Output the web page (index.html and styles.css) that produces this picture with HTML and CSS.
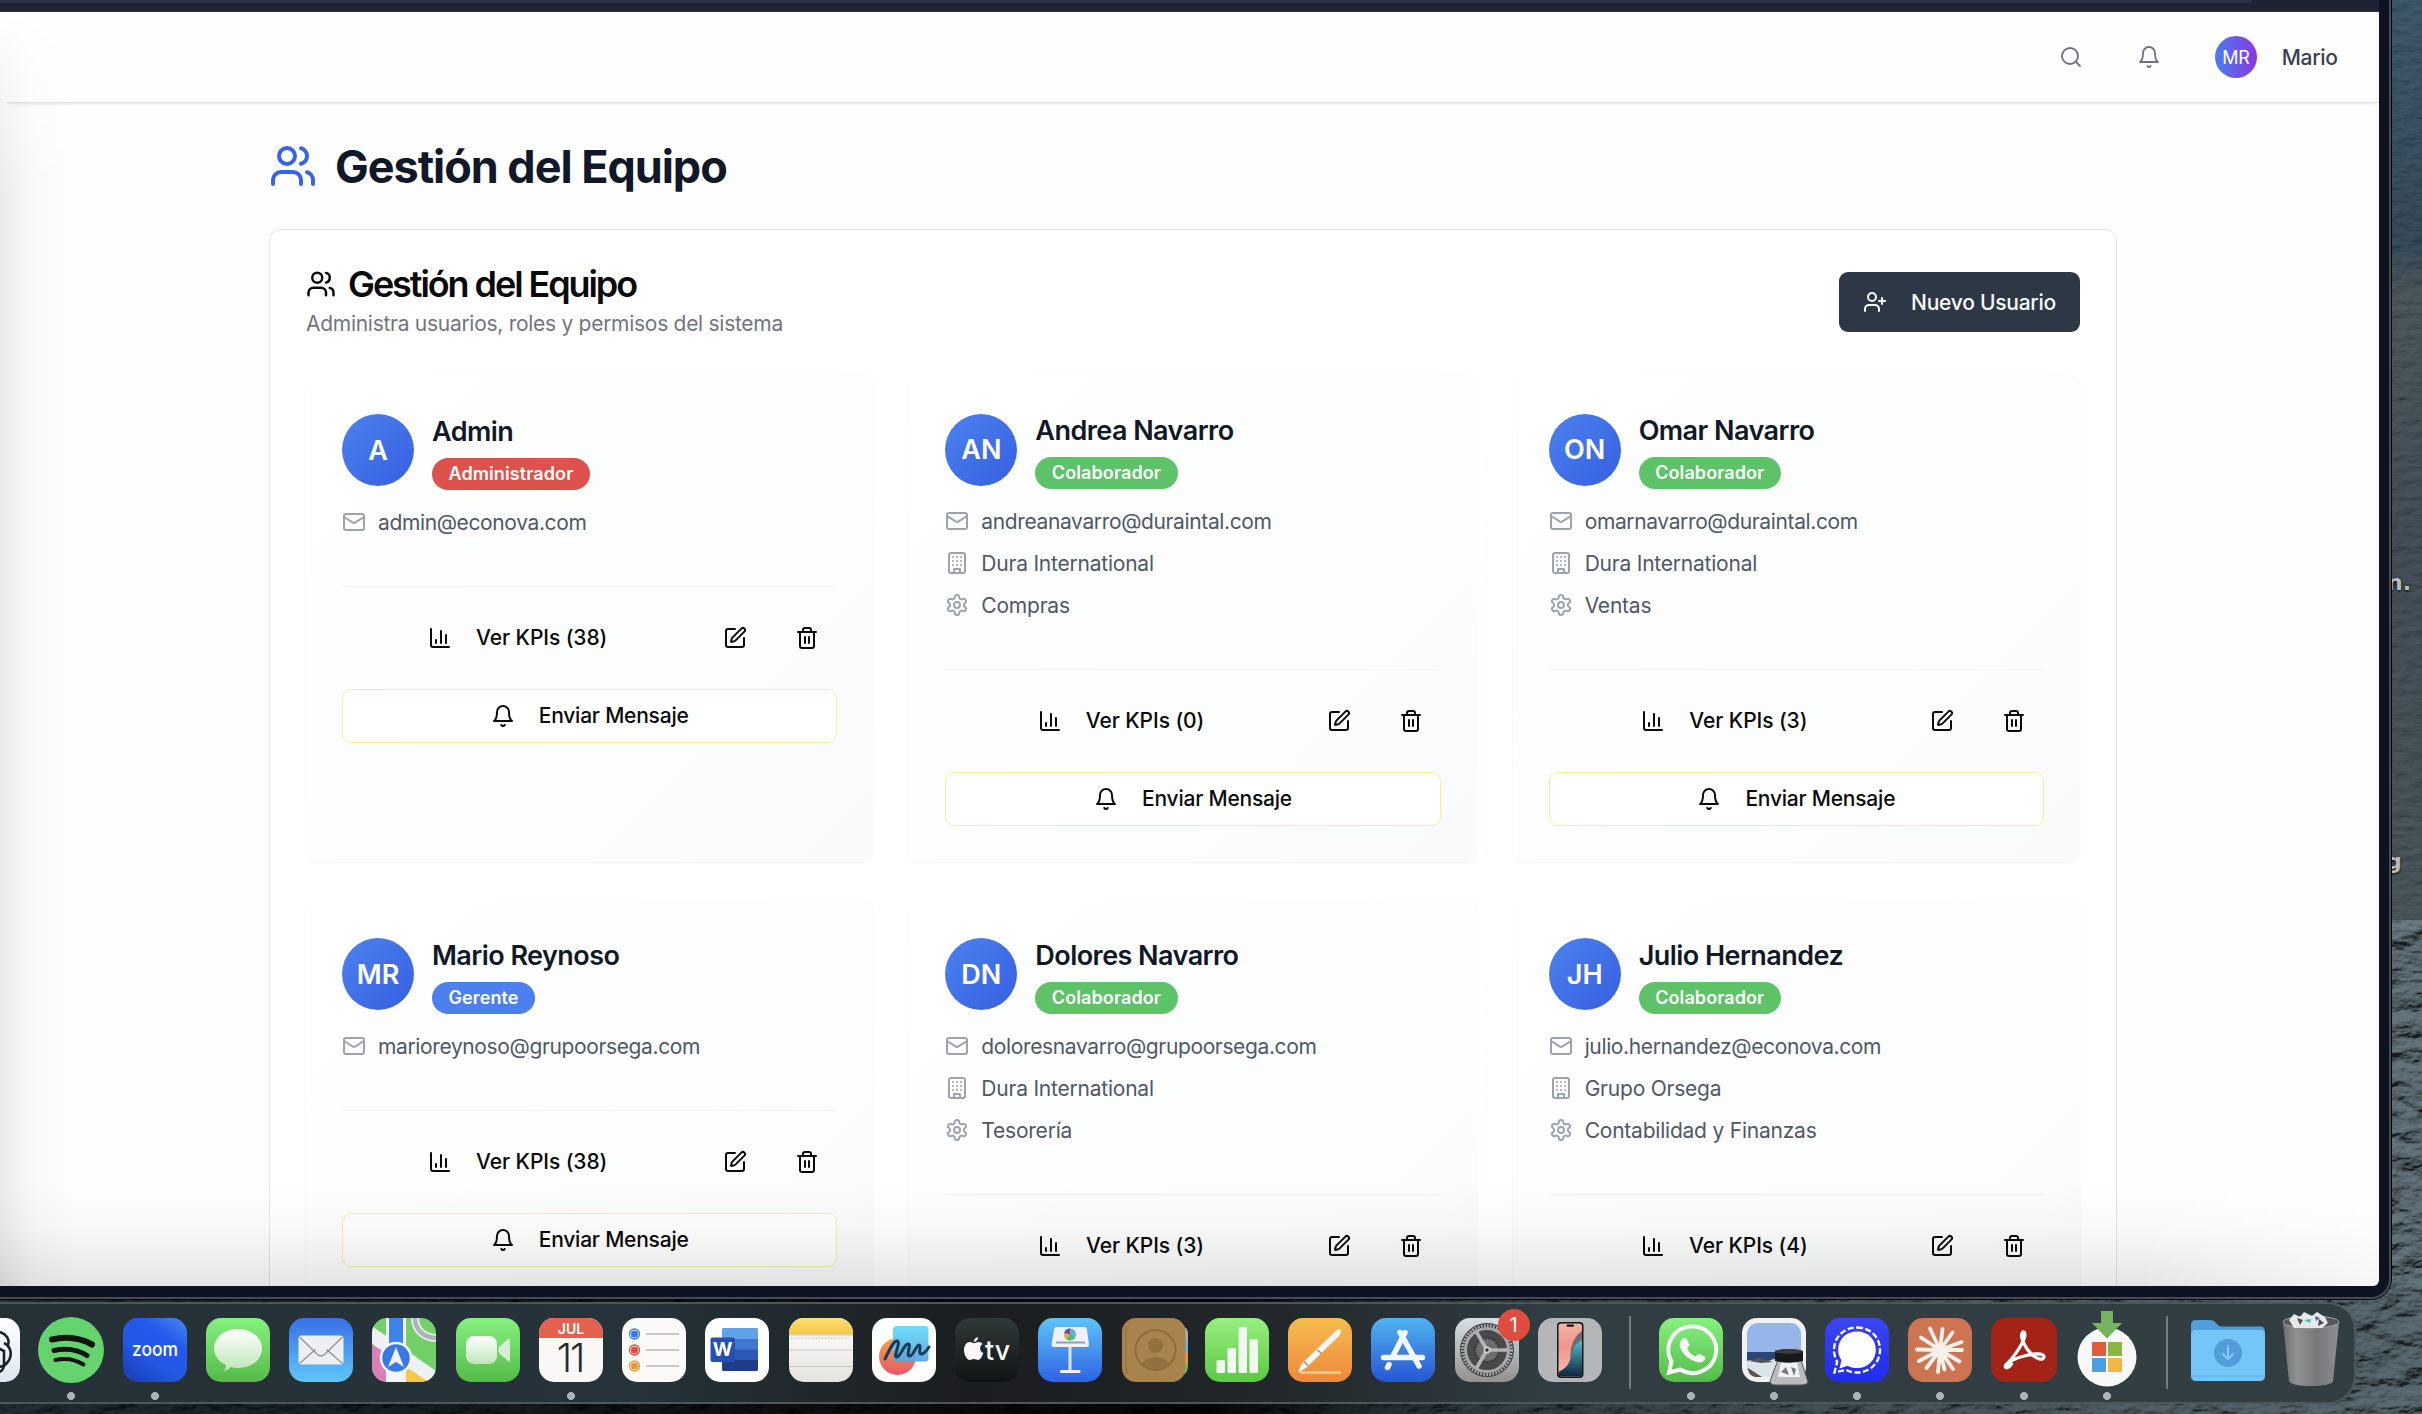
FILE: index.html
```html
<!DOCTYPE html>
<html lang="es">
<head>
<meta charset="utf-8">
<title>Gestión del Equipo</title>
<link rel="stylesheet" href="styles.css">
</head>
<body>
<svg class="defs" width="0" height="0" aria-hidden="true">
  <symbol id="users" viewBox="0 0 24 24"><path d="M16 21v-2a4 4 0 0 0-4-4H6a4 4 0 0 0-4 4v2"/><circle cx="9" cy="7" r="4"/><path d="M22 21v-2a4 4 0 0 0-3-3.87"/><path d="M16 3.13a4 4 0 0 1 0 7.75"/></symbol>
  <symbol id="user-plus" viewBox="0 0 24 24"><path d="M16 21v-2a4 4 0 0 0-4-4H6a4 4 0 0 0-4 4v2"/><circle cx="9" cy="7" r="4"/><path d="M19 8v6M22 11h-6"/></symbol>
  <symbol id="search" viewBox="0 0 24 24"><circle cx="11" cy="11" r="8"/><path d="m21 21-4.3-4.3"/></symbol>
  <symbol id="bell" viewBox="0 0 24 24"><path d="M6 8a6 6 0 0 1 12 0c0 7 3 9 3 9H3s3-2 3-9"/><path d="M10.3 21a1.94 1.94 0 0 0 3.4 0"/></symbol>
  <symbol id="mail" viewBox="0 0 24 24"><rect width="20" height="16" x="2" y="4" rx="2"/><path d="m22 7-8.97 5.7a1.94 1.94 0 0 1-2.06 0L2 7"/></symbol>
  <symbol id="building" viewBox="0 0 24 24"><rect width="16" height="20" x="4" y="2" rx="2"/><path d="M9 22v-4h6v4M8 6h.01M16 6h.01M12 6h.01M12 10h.01M12 14h.01M16 10h.01M16 14h.01M8 10h.01M8 14h.01"/></symbol>
  <symbol id="settings" viewBox="0 0 24 24"><path d="M12.22 2h-.44a2 2 0 0 0-2 2v.18a2 2 0 0 1-1 1.73l-.43.25a2 2 0 0 1-2 0l-.15-.08a2 2 0 0 0-2.73.73l-.22.38a2 2 0 0 0 .73 2.73l.15.1a2 2 0 0 1 1 1.72v.51a2 2 0 0 1-1 1.74l-.15.09a2 2 0 0 0-.73 2.73l.22.38a2 2 0 0 0 2.73.73l.15-.08a2 2 0 0 1 2 0l.43.25a2 2 0 0 1 1 1.73V20a2 2 0 0 0 2 2h.44a2 2 0 0 0 2-2v-.18a2 2 0 0 1 1-1.73l.43-.25a2 2 0 0 1 2 0l.15.08a2 2 0 0 0 2.73-.73l.22-.39a2 2 0 0 0-.73-2.73l-.15-.08a2 2 0 0 1-1-1.74v-.5a2 2 0 0 1 1-1.74l.15-.09a2 2 0 0 0 .73-2.73l-.22-.38a2 2 0 0 0-2.73-.73l-.15.08a2 2 0 0 1-2 0l-.43-.25a2 2 0 0 1-1-1.73V4a2 2 0 0 0-2-2z"/><circle cx="12" cy="12" r="3"/></symbol>
  <symbol id="chart" viewBox="0 0 24 24"><path d="M3 3v16a2 2 0 0 0 2 2h16M18 17V9M13 17V5M8 17v-3"/></symbol>
  <symbol id="edit" viewBox="0 0 24 24"><path d="M12 3H5a2 2 0 0 0-2 2v14a2 2 0 0 0 2 2h14a2 2 0 0 0 2-2v-7"/><path d="M18.375 2.625a1 1 0 0 1 3 3l-9.013 9.014a2 2 0 0 1-.853.505l-2.873.84a.5.5 0 0 1-.62-.62l.84-2.873a2 2 0 0 1 .506-.852z"/></symbol>
  <symbol id="trash" viewBox="0 0 24 24"><path d="M3 6h18M19 6v14c0 1-1 2-2 2H7c-1 0-2-1-2-2V6M8 6V4c0-1 1-2 2-2h4c1 0 2 1 2 2v2M10 11v6M14 11v6"/></symbol>
</svg>

<div class="desktop">
  <svg class="wallpaper" width="2422" height="1414" aria-hidden="true">
    <defs>
      <filter id="rocks" x="0" y="0" width="100%" height="100%"><feTurbulence type="fractalNoise" baseFrequency="0.03 0.055" numOctaves="4" seed="8"/><feDiffuseLighting surfaceScale="9" diffuseConstant="1" lighting-color="#8094a0"><feDistantLight azimuth="250" elevation="42"/></feDiffuseLighting></filter>
      <filter id="slope" x="0" y="0" width="100%" height="100%"><feTurbulence type="fractalNoise" baseFrequency="0.05 0.12" numOctaves="4" seed="3"/><feDiffuseLighting surfaceScale="3" lighting-color="#809094"><feDistantLight azimuth="240" elevation="45"/></feDiffuseLighting></filter>
      <linearGradient id="sky" x2="0" y2="1"><stop offset="0" stop-color="#2c4a5e"/><stop offset=".17" stop-color="#22364a"/><stop offset=".21" stop-color="#3c484c"/><stop offset=".38" stop-color="#323d48"/><stop offset=".6" stop-color="#394449"/><stop offset="1" stop-color="#3b484b"/></linearGradient>
      <linearGradient id="shade"><stop offset="0" stop-color="#07131b" stop-opacity=".72"/><stop offset=".3" stop-color="#000" stop-opacity=".85"/><stop offset=".5" stop-color="#000" stop-opacity=".95"/><stop offset=".6" stop-color="#0c1418" stop-opacity=".6"/><stop offset="1" stop-color="#26343a" stop-opacity=".15"/></linearGradient>
    </defs>
    <rect width="2422" height="1414" fill="url(#sky)"/>
    <rect x="2388" width="34" height="930" filter="url(#slope)" opacity=".25"/>
    <rect x="2388" y="920" width="34" height="494" filter="url(#rocks)" opacity=".6"/>
    <rect y="1290" width="2388" height="124" filter="url(#rocks)" opacity=".6"/>
    <rect y="1290" width="2422" height="124" fill="url(#shade)"/>
  </svg>
  <span class="desk-word desk-word-a">n.</span>
  <span class="desk-word desk-word-b">g</span>

  <div class="window">
    <div class="chrome"><div class="toolbar"></div></div>
    <div class="page">
      <header class="topbar">
        <svg class="ico"><use href="#search"/></svg>
        <svg class="ico"><use href="#bell"/></svg>
        <div class="me"><span class="me-avatar">MR</span><span class="me-name">Mario</span></div>
      </header>
      <main class="content">
        <h1><svg class="ico"><use href="#users"/></svg><span>Gestión del Equipo</span></h1>
        <section class="panel">
          <div class="panel-head">
            <div>
              <h2><svg class="ico"><use href="#users"/></svg><span>Gestión del Equipo</span></h2>
              <p>Administra usuarios, roles y permisos del sistema</p>
            </div>
            <button class="primary"><svg class="ico"><use href="#user-plus"/></svg><span>Nuevo Usuario</span></button>
          </div>
          <div class="cards">
            <article class="card">
              <div class="who"><span class="avatar">A</span><div><h3>Admin</h3><span class="badge admin">Administrador</span></div></div>
              <ul><li class="email"><svg class="ico"><use href="#mail"/></svg>admin@econova.com</li></ul>
              <div class="actions"><button class="kpi"><svg class="ico"><use href="#chart"/></svg>Ver KPIs (38)</button><button><svg class="ico"><use href="#edit"/></svg></button><button><svg class="ico"><use href="#trash"/></svg></button></div>
              <button class="message"><svg class="ico"><use href="#bell"/></svg>Enviar Mensaje</button>
            </article>
            <article class="card">
              <div class="who"><span class="avatar">AN</span><div><h3>Andrea Navarro</h3><span class="badge">Colaborador</span></div></div>
              <ul><li class="email"><svg class="ico"><use href="#mail"/></svg>andreanavarro@duraintal.com</li><li><svg class="ico"><use href="#building"/></svg>Dura International</li><li><svg class="ico"><use href="#settings"/></svg>Compras</li></ul>
              <div class="actions"><button class="kpi"><svg class="ico"><use href="#chart"/></svg>Ver KPIs (0)</button><button><svg class="ico"><use href="#edit"/></svg></button><button><svg class="ico"><use href="#trash"/></svg></button></div>
              <button class="message"><svg class="ico"><use href="#bell"/></svg>Enviar Mensaje</button>
            </article>
            <article class="card">
              <div class="who"><span class="avatar">ON</span><div><h3>Omar Navarro</h3><span class="badge">Colaborador</span></div></div>
              <ul><li class="email"><svg class="ico"><use href="#mail"/></svg>omarnavarro@duraintal.com</li><li><svg class="ico"><use href="#building"/></svg>Dura International</li><li><svg class="ico"><use href="#settings"/></svg>Ventas</li></ul>
              <div class="actions"><button class="kpi"><svg class="ico"><use href="#chart"/></svg>Ver KPIs (3)</button><button><svg class="ico"><use href="#edit"/></svg></button><button><svg class="ico"><use href="#trash"/></svg></button></div>
              <button class="message"><svg class="ico"><use href="#bell"/></svg>Enviar Mensaje</button>
            </article>
            <article class="card">
              <div class="who"><span class="avatar">MR</span><div><h3>Mario Reynoso</h3><span class="badge manager">Gerente</span></div></div>
              <ul><li class="email"><svg class="ico"><use href="#mail"/></svg>marioreynoso@grupoorsega.com</li></ul>
              <div class="actions"><button class="kpi"><svg class="ico"><use href="#chart"/></svg>Ver KPIs (38)</button><button><svg class="ico"><use href="#edit"/></svg></button><button><svg class="ico"><use href="#trash"/></svg></button></div>
              <button class="message"><svg class="ico"><use href="#bell"/></svg>Enviar Mensaje</button>
            </article>
            <article class="card">
              <div class="who"><span class="avatar">DN</span><div><h3>Dolores Navarro</h3><span class="badge">Colaborador</span></div></div>
              <ul><li class="email"><svg class="ico"><use href="#mail"/></svg>doloresnavarro@grupoorsega.com</li><li><svg class="ico"><use href="#building"/></svg>Dura International</li><li><svg class="ico"><use href="#settings"/></svg>Tesorería</li></ul>
              <div class="actions"><button class="kpi"><svg class="ico"><use href="#chart"/></svg>Ver KPIs (3)</button><button><svg class="ico"><use href="#edit"/></svg></button><button><svg class="ico"><use href="#trash"/></svg></button></div>
            </article>
            <article class="card">
              <div class="who"><span class="avatar">JH</span><div><h3>Julio Hernandez</h3><span class="badge">Colaborador</span></div></div>
              <ul><li class="email"><svg class="ico"><use href="#mail"/></svg>julio.hernandez@econova.com</li><li><svg class="ico"><use href="#building"/></svg>Grupo Orsega</li><li><svg class="ico"><use href="#settings"/></svg>Contabilidad y Finanzas</li></ul>
              <div class="actions"><button class="kpi"><svg class="ico"><use href="#chart"/></svg>Ver KPIs (4)</button><button><svg class="ico"><use href="#edit"/></svg></button><button><svg class="ico"><use href="#trash"/></svg></button></div>
            </article>
          </div>
        </section>
      </main>
      <div class="fade-left"></div>
      <div class="fade-bottom"></div>
    </div>
  </div>

  <nav class="dock">
    <svg class="app" viewBox="0 0 64 64"><defs>
      <linearGradient id="g-gpt" x2="0" y2="1"><stop stop-color="#fff"/><stop offset="1" stop-color="#dfe7f3"/></linearGradient>
      <linearGradient id="g-green" x2="0" y2="1"><stop stop-color="#86f180"/><stop offset="1" stop-color="#55bb48"/></linearGradient>
      <linearGradient id="g-zoom" x1="1" x2=".3" y2="1"><stop stop-color="#4b8af0"/><stop offset=".35" stop-color="#2459ec"/><stop offset=".7" stop-color="#2357e6"/><stop offset="1" stop-color="#1c43bd"/></linearGradient>
      <linearGradient id="g-mail" x2="0" y2="1"><stop stop-color="#3a70e6"/><stop offset="1" stop-color="#5fc6f9"/></linearGradient>
      <linearGradient id="g-white" x2="0" y2="1"><stop stop-color="#fff"/><stop offset="1" stop-color="#e4e3df"/></linearGradient>
      <linearGradient id="g-bubble" x2="0" y2="1"><stop stop-color="#fff"/><stop offset="1" stop-color="#bfe5b9"/></linearGradient>
      <linearGradient id="g-key" x2="0" y2="1"><stop stop-color="#5ec4fa"/><stop offset="1" stop-color="#2f62e4"/></linearGradient>
      <linearGradient id="g-tv" x2="0" y2="1"><stop stop-color="#2e3a37"/><stop offset="1" stop-color="#101415"/></linearGradient>
      <linearGradient id="g-num" x2="0" y2="1"><stop stop-color="#97f07f"/><stop offset="1" stop-color="#5cc843"/></linearGradient>
      <linearGradient id="g-pages" x2="0" y2="1"><stop stop-color="#f5bc4f"/><stop offset="1" stop-color="#ee883b"/></linearGradient>
      <linearGradient id="g-store" x2="0" y2="1"><stop stop-color="#50b3ee"/><stop offset="1" stop-color="#2756d4"/></linearGradient>
      <linearGradient id="g-set" x2="0" y2="1"><stop stop-color="#d8e0e6"/><stop offset="1" stop-color="#94918e"/></linearGradient>
      <linearGradient id="g-notes" x2="0" y2="1"><stop stop-color="#f9e07a"/><stop offset="1" stop-color="#f5c63d"/></linearGradient>
      <linearGradient id="g-free" x2="0" y2="1"><stop stop-color="#f3a243"/><stop offset="1" stop-color="#e8596b"/></linearGradient>
      <linearGradient id="g-free2" x2="0" y2="1"><stop stop-color="#64d9fb"/><stop offset="1" stop-color="#55a8dd"/></linearGradient>
      <linearGradient id="g-sig" x2="0" y2="1"><stop stop-color="#3c46f5"/><stop offset="1" stop-color="#1f2bef"/></linearGradient>
      <linearGradient id="g-bin"><stop stop-color="#6e6f71"/><stop offset=".25" stop-color="#909193"/><stop offset=".6" stop-color="#77787a"/><stop offset="1" stop-color="#8d8e90"/></linearGradient>
      <linearGradient id="g-phone" x2="0" y2="1"><stop stop-color="#f2b3a0"/><stop offset=".45" stop-color="#ee948e"/><stop offset="1" stop-color="#f5c3b4"/></linearGradient>
      <linearGradient id="g-teal" x2="0" y2="1"><stop stop-color="#4fc1c8"/><stop offset="1" stop-color="#10243e"/></linearGradient>
      <clipPath id="tile"><rect width="64" height="64" rx="15"/></clipPath>
      </defs>
      <rect width="64" height="64" rx="15" fill="url(#g-gpt)"/><g fill="none" stroke="#1c2227" stroke-width="2.6"><path d="M44 14c6 2 10 7 8 13M48 25c8 4 9 14 2 21-3 3-6 3-8 2M42 30l6 3v13c0 8-7 10-10 8M42 30v24"/></g></svg>
    <svg class="app running" viewBox="0 0 64 64"><circle cx="32" cy="32" r="33" fill="#65d36e"/><g fill="none" stroke="#101512" stroke-linecap="round"><path d="M13 21.500c13-3 28-1.500 40 5" stroke-width="6"/><path d="M15 32.500c11-2.500 23-1.500 33 5" stroke-width="5"/><path d="M16.500 42c9-2 19-1 28 4.500" stroke-width="4"/></g></svg>
    <svg class="app running" viewBox="0 0 64 64"><rect width="64" height="64" rx="15" fill="url(#g-zoom)"/><text x="32" y="37.500" class="zoom-name" textLength="46" lengthAdjust="spacingAndGlyphs">zoom</text></svg>
    <svg class="app" viewBox="0 0 64 64"><rect width="64" height="64" rx="15" fill="url(#g-green)"/><path d="M32 11c13.500 0 24 8.500 24 19.500S45.500 50 32 50c-2.500 0-5-.3-7.300-1-1.700 2-4 3.500-7.200 4 2-1.800 2.600-3.500 2.300-6C12.500 43.500 8 37.500 8 30.500 8 19.500 18.500 11 32 11z" fill="url(#g-bubble)"/></svg>
    <svg class="app" viewBox="0 0 64 64"><rect width="64" height="64" rx="15" fill="url(#g-mail)"/><rect x="9.500" y="17.500" width="45" height="29" rx="3" fill="#eeeff0"/><path d="m10.500 45.500 16-14m11 0 16 14M10.500 19l18 17.500q3.500 3 7 0L53.500 19" fill="none" stroke="#8d9298" stroke-width="1.300"/></svg>
    <svg class="app" viewBox="0 0 64 64"><g clip-path="url(#tile)"><path fill="#73cf68" d="M0 0h64v64H0z"/><path fill="#d97fbc" d="M0 22l20 18v24H0z"/><path fill="#f2ca48" d="m32 42 26 22H32z"/><path fill="#eff0f2" d="M0 8l64 45v16L0 26z"/><path fill="#f3f4f5" d="M14 0h20v64H14z"/><path fill="#3f82ea" d="M17 0h14v34H17z"/><path d="M43 0c0 12 9 20 22 20" fill="none" stroke="#eef0f1" stroke-width="8"/><path d="M43 0c0 12 9 20 22 20" fill="none" stroke="#adb3b7" stroke-width="4.500"/></g><circle cx="24" cy="40" r="15" fill="#3679e7" stroke="#f4f5f6" stroke-width="2.500"/><path d="m24 29 8 20-8-5-8 5z" fill="#eef2f8"/></svg>
    <svg class="app" viewBox="0 0 64 64"><rect width="64" height="64" rx="15" fill="url(#g-green)"/><rect x="10" y="18" width="31" height="28" rx="8" fill="url(#g-bubble)"/><path d="m43 29 9-8q2-1.500 2 1v20q0 2.500-2 1l-9-8q-1.500-3 0-6z" fill="#d6edd2"/></svg>
    <svg class="app running" viewBox="0 0 64 64"><g clip-path="url(#tile)"><path fill="#f9f8f6" d="M0 0h64v64H0z"/><path fill="#e4604f" d="M0 0h64v20H0z"/></g><text x="32" y="15.500" class="cal-month">JUL</text><text x="31" y="54" class="cal-day">11</text></svg>
    <svg class="app" viewBox="0 0 64 64"><rect width="64" height="64" rx="15" fill="#fbfaf9"/><g stroke="#b8b8b8" stroke-width="1.500"><path d="M24 16h33M24 32h33M24 48h33"/></g><g fill="#fff" stroke-width="1.300"><circle cx="12.500" cy="16" r="5" stroke="#3478f0"/><circle cx="12.500" cy="32" r="5" stroke="#e24c3c"/><circle cx="12.500" cy="48" r="5" stroke="#e59732"/></g><circle cx="12.500" cy="16" r="3.500" fill="#3478f0"/><circle cx="12.500" cy="32" r="3.500" fill="#e24c3c"/><circle cx="12.500" cy="48" r="3.500" fill="#e59732"/></svg>
    <svg class="app" viewBox="0 0 64 64"><rect width="64" height="64" rx="15" fill="#fff"/><rect x="17" y="10" width="36" height="43" rx="2" fill="#3f78cf"/><path d="M17 21V12q0-2 2-2h32q2 0 2 2v9z" fill="#5fa2e8"/><path d="M17 31.500h36V42H17z" fill="#2c5abb"/><path d="M17 42h36v9q0 2-2 2H19q-2 0-2-2z" fill="#1f3d86"/><rect x="5.500" y="19.500" width="24.500" height="24.500" rx="2" fill="#2451b0"/><text x="17.700" y="38" class="word-w">W</text></svg>
    <svg class="app" viewBox="0 0 64 64"><g clip-path="url(#tile)"><path fill="url(#g-white)" d="M0 0h64v64H0z"/><path fill="url(#g-notes)" d="M0 0h64v16.500H0z"/><path d="M0 17h64M0 32h64M0 48.500h64" stroke="#c6c5c2" stroke-width="1.200"/><path d="M2 20h60" stroke="#a6a6a6" stroke-dasharray="1 1.500"/></g></svg>
    <svg class="app" viewBox="0 0 64 64"><rect width="64" height="64" rx="15" fill="#fff"/><circle cx="25.500" cy="38.500" r="18.500" fill="url(#g-free)"/><rect x="21" y="8" width="35.500" height="35.500" rx="3.500" fill="url(#g-free2)" opacity=".93"/><path d="M13 41c4-8 8-18 12-18 5 0-5 17 0 16 4-1 7-13 11-13s-3 13 2 12c4-1 6-11 9-11s-2 10 3 9c3-1 5-4 7-7" fill="none" stroke="#173b5e" stroke-width="3" stroke-linecap="round"/></svg>
    <svg class="app" viewBox="0 0 64 64"><rect width="64" height="64" rx="15" fill="url(#g-tv)"/><path d="M18.700 25.200c1.700 0 3-1.300 4.900-1.300 1.600 0 3 .8 3.900 2-3.500 2.200-3 7.400.8 9.100-.8 3-2.900 7-5.200 7-1.600 0-2.200-1-4.200-1s-2.700 1-4.200 1c-2.900 0-5.700-5.500-5.700-10 0-4.600 2.700-8 5.900-8 1.800 0 2.900 1.200 3.800 1.200zm4.400-6c.2 2-1.600 4.600-4.300 4.600-.2-2.300 1.900-4.400 4.300-4.600z" fill="#f8f8f8"/><text x="42.500" y="41.500" class="tv-name" textLength="25" lengthAdjust="spacingAndGlyphs">tv</text></svg>
    <svg class="app" viewBox="0 0 64 64"><rect width="64" height="64" rx="15" fill="url(#g-key)"/><path d="M30.500 29h3v24h-3z" fill="#dfe5ec"/><rect x="22" y="52" width="20.500" height="3" rx="1" fill="#f1f3f5"/><path d="M18 9h29q1.500 0 1.700 1.500L51 26q.2 3-2 3H15.500q-2.200 0-2-3L16.300 10.500Q16.500 9 18 9z" fill="#eef2f6"/><path d="M18 24.500h29" stroke="#8ba2b8" stroke-width="2"/><circle cx="32" cy="16.500" r="6" fill="#58b3d7"/><path d="M32 16.500v-6a6 6 0 0 0-5.800 4.500z" fill="#7e4696"/><path d="m32 16.500-5.800-1.500a6 6 0 0 0 2.300 6.300z" fill="#e9b044"/><path d="m32 16.500-3.500 4.800a6 6 0 0 0 8.300-1.300z" fill="#63ba52"/></svg>
    <svg class="app" viewBox="0 0 64 64"><path fill="#ababab" d="M60 8q6 1 6 8v7h-6z"/><path fill="#63b7e6" d="M60 23h6v11h-6z"/><path fill="#e99638" d="M60 34h6v12h-6z"/><path fill="#62c766" d="M60 46h6q0 9-4 10z"/><rect width="63.500" height="64" rx="14" fill="#a9834e"/><path d="M4 8v48" stroke="#936f3d" stroke-width="1.300"/><g fill="#93703f"><circle cx="33.500" cy="27.500" r="7.500"/><path d="M20 46c3-9 24-9 27 0-7 8-20 8-27 0z"/></g><circle cx="33.500" cy="32" r="20" fill="none" stroke="#8d6a3a" stroke-width="1.800"/></svg>
    <svg class="app" viewBox="0 0 64 64"><rect width="64" height="64" rx="15" fill="url(#g-num)"/><g fill="#f1f8ef"><rect x="11.500" y="42" width="8.500" height="13" rx="1.500"/><rect x="22.500" y="30" width="8.500" height="25" rx="1.500"/><rect x="33.500" y="9" width="8.500" height="46" rx="1.500"/><rect x="44.500" y="21" width="8.500" height="34" rx="1.500"/></g></svg>
    <svg class="app" viewBox="0 0 64 64"><rect width="64" height="64" rx="15" fill="url(#g-pages)"/><path d="M12 54.500h41" stroke="#f8cb92" stroke-width="2.500"/><path d="M46.500 14c2-3 6-3.500 6.500-1.500.4 1.500-.5 3.500-2 5.500L18.500 49.500 10 54.500l3-8z" fill="#f5f5f5"/><path d="m29.500 32 4 3.500M16 43.500l4 4" stroke="#8d8b89" stroke-width="1.300"/></svg>
    <svg class="app" viewBox="0 0 64 64"><rect width="64" height="64" rx="15" fill="url(#g-store)"/><g stroke="#f3f7fb" stroke-width="5.500" stroke-linecap="round" fill="none"><path d="M34 14.500 21.500 39M29 14.500 48 48M12.500 39.500h39M18 46.500l-1.500 3"/></g></svg>
    <span class="app-wrap"><svg class="app" viewBox="0 0 64 64"><rect width="64" height="64" rx="15" fill="url(#g-set)"/><circle cx="32" cy="32" r="27" fill="#3d3e40"/><circle cx="32" cy="32" r="24.500" fill="none" stroke="#aaaaab" stroke-width="3" stroke-dasharray="1.800 1.300"/><circle cx="32" cy="32" r="21.500" fill="#4a4a4c" stroke="#a9a9aa" stroke-width="3"/><circle cx="32" cy="32" r="12" fill="#6d6d70" stroke="#37383a" stroke-width="2.500" stroke-dasharray="2 1"/><path d="M32 32h20M32 32 21.500 14M32 32 21.500 50" stroke="#b4b4b5" stroke-width="3.500"/><circle cx="32" cy="32" r="3.500" fill="#d1d1d2"/><circle cx="32" cy="32" r="1.800" fill="#333"/></svg><b class="count">1</b></span>
    <svg class="app" viewBox="0 0 64 64"><rect width="64" height="64" rx="15" fill="#b4b6b8"/><rect x="19" y="4" width="26.500" height="56" rx="4" fill="#141619"/><rect x="20.500" y="5.500" width="23.500" height="53" rx="3" fill="url(#g-phone)"/><path d="M44 13v17c-9 3-10 9-11 13-2-12 2-24 11-30z" fill="#6e6a70"/><path d="M44 22c-9 5-10 12-12 20-2 6-6 9-11.500 12v2q0 2.500 2.500 2.500h18.500q2.500 0 2.500-2.500z" fill="url(#g-teal)"/><rect x="28.500" y="6.500" width="7.500" height="2.300" rx="1.100" fill="#111"/></svg>
    <i class="divider"></i>
    <svg class="app running" viewBox="0 0 64 64"><rect width="64" height="64" rx="15" fill="url(#g-green)"/><path d="M33 8.500a23.300 23.300 0 0 0-20.500 35L10 54.500l11.500-3A23.300 23.300 0 1 0 33 8.500z" fill="none" stroke="#f5f8f5" stroke-width="4"/><path d="M24 20.500c1-.8 3-.8 3.700.6l2.600 5.500c.5 1.200-2.300 3.500-1.900 4.500 1.200 3.200 4.300 6 7.700 7.200 1.200.4 3-3 4.200-2.500l5.300 2.600c1.200.6.600 2.800-.2 3.800-2 2.400-5.700 2.600-8.500 1.500-8-2.800-13-7.500-15.600-14-1.200-3.200-.1-7.200 2.700-9.200z" fill="#f5f8f5"/></svg>
    <svg class="app running" viewBox="0 0 64 64"><rect width="64" height="64" rx="15" fill="#f1f1f2"/><rect x="5" y="5" width="54" height="54" rx="11" fill="#98b5ea"/><path d="M5 34h54v18H5z" fill="#2b4578"/><path d="M5 43c8-3 16 3 24-1 10-4 20 2 30-1v8q0 10-10 10H15Q5 59 5 49z" fill="#dce4eb"/><path d="m6 50 14 9h-7q-7-2-7-9zM7 43l10-3 14 4-12 1z" fill="#575452"/><path d="M36 42h23l7 22q-1 3-7 3H34q-6 0-6-4z" fill="#b9bbbc" stroke="#555" stroke-width="1"/><path d="M39 44h16l3 15H36z" fill="#f0f1f2"/><path d="m39 54 5-5 3 8zM49 49l5 2-2 7z" fill="#737c86"/><path d="M33 33q14-4 28 0v10q-14 3.500-28 0z" fill="#17181a"/><ellipse cx="47" cy="33.500" rx="14" ry="2.500" fill="#393a3c"/></svg>
    <svg class="app running" viewBox="0 0 64 64"><rect width="64" height="64" rx="15" fill="url(#g-sig)"/><path d="M32 9.500c13 0 23 9.500 23 22.300S45 54.500 32 54.500c-4 0-7.500-.8-10.700-2.600L9.500 54.500l2.700-10.800A22 22 0 0 1 9 31.800C9 19 19 9.500 32 9.500z" fill="none" stroke="#fff" stroke-width="2.300" stroke-dasharray="6 2.500"/><path d="M32 13.500c11 0 18.800 8 18.800 18.200S43 50 32 50c-3.500 0-6.700-.7-9.500-2.300l-8 2.800 1.900-8.500a18 18 0 0 1-3.200-10.300c0-10.200 7.800-18.200 18.800-18.200z" fill="#fff"/></svg>
    <svg class="app running" viewBox="0 0 64 64"><rect width="64" height="64" rx="15" fill="#cd7452"/><path d="M32 32 22 10.500M32 32l2.500-21M32 32l12.500-17.500M32 32l21.500-8M32 32h22M32 32l19.500 11.500M32 32l13 19M32 32l4.500 19.500M32 32l-2 22M32 32 18.500 50M32 32 11 43M32 32 9 31.500M32 32 13 19.500" stroke="#faf0ea" stroke-width="3.800" stroke-linecap="round"/></svg>
    <svg class="app running" viewBox="0 0 64 64"><rect x="-1" width="66" height="64" rx="15" fill="#a32316"/><path d="M15 46c5-5 14-17 17-25 2-6 0-8-1.500-6.500-3 3.500 2 15 9 21.500 5 5 12 7 12.500 3 .4-4-10-4-20-1-8 2-17 6-18.500 9.500-1 3.500 3 3 6-1.500" fill="none" stroke="#fff" stroke-width="3.300" stroke-linecap="round" stroke-linejoin="round"/></svg>
    <svg class="app running" viewBox="0 0 64 64"><circle cx="32" cy="39" r="29.500" fill="#f8f8f8"/><path fill="#e05c3d" d="M17 24h14v14H17z"/><path fill="#8cb63d" d="M33 24h14v14H33z"/><path fill="#4d9fe4" d="M17 40h14v14H17z"/><path fill="#f1b748" d="M33 40h14v14H33z"/><path d="M26-7h12V5h9L32 20.500 17 5h9z" fill="#76b35f"/></svg>
    <i class="divider"></i>
    <svg class="app" viewBox="0 0 64 64"><path d="M-5 7q0-5 5-5h14q3 0 5 2l3 3q1.500 1.500 4 1.500h38q5 0 5 5V30H-5z" fill="#4f9fdb"/><path d="M-5 17q0-5 5-5h64q5 0 5 5v41q0 5-5 5H0q-5 0-5-5z" fill="#75c6f8"/><path d="M-4 58h72" stroke="#58aee4"/><circle cx="32" cy="35" r="14" fill="#529dda"/><path d="M32 28v13m-5-5 5 5 5-5" fill="none" stroke="#84cbf6" stroke-width="2" stroke-linecap="round"/></svg>
    <svg class="app" viewBox="0 0 64 64"><path d="M4 4 60 4 54 63q-2 5-22 5t-22-5z" fill="url(#g-bin)"/><ellipse cx="32" cy="4" rx="28" ry="6" fill="#55585b" stroke="#a4a6a8"/><path d="m10 2 5-6 6 3 4-5 8 4 5-4 8 5 3 6-6 5H15z" fill="#e7e8e8"/><path d="m18 0 6 2-3 5zM40 1l5 4-6 3z" fill="#5b4a47"/><path d="m25 2 7-1-1 4z" fill="#43b8c5"/><path d="m36-2 5 2-4 3z" fill="#4465ba"/></svg>
  </nav>
</div>
</body>
</html>
```
FILE: styles.css
```css
* { box-sizing: border-box; }
body { margin: 0; font-family: Inter, "Liberation Sans", sans-serif; color: #0a0a0a; }
h1, h2, h3, p, ul { margin: 0; padding: 0; }
button { font: inherit; color: inherit; border: 0; background: none; padding: 0; letter-spacing: inherit; }
.defs { position: absolute; }

.desktop { position: relative; width: 2422px; height: 1414px; overflow: hidden; display: flex; flex-direction: column; }
.wallpaper { position: absolute; inset: 0; }
.desk-word { position: absolute; font: bold 22px/24px "DejaVu Sans", sans-serif; color: #b9baba; text-shadow: 0 1px 3px #000; }
.desk-word-a { left: 2387px; top: 571px; }
.desk-word-b { left: 2386px; top: 850px; }

.window { position: relative; width: 2391px; height: 1299px; flex: none; padding-right: 10px; background: #0e1322; border: solid #484b55; border-width: 0 2px 2px 0; border-bottom-right-radius: 20px; box-shadow: 0 0 0 1px #05070a; margin-bottom: 3px; }
.chrome { height: 12px; background: #1e2333; border-bottom: 1px solid #2d3243; }
.toolbar { width: 2252px; height: 3px; background: #2d3145; border-bottom-right-radius: 4px; }
.page { position: relative; height: 1274px; overflow: hidden; background: #fefefe; border-bottom-right-radius: 6px; }

.topbar { height: 91px; margin-left: 7px; padding-right: 41.500px; display: flex; align-items: center; justify-content: flex-end; background: #fefefe; border-bottom: 1px solid #e2e3e5; box-shadow: 0 3px 3px -2px rgba(0,0,0,.1); color: #6b7280; }
.ico { width: 24px; height: 24px; flex: none; display: block; fill: none; stroke: currentColor; stroke-width: 2; stroke-linecap: round; stroke-linejoin: round; }
.topbar .ico { stroke-width: 1.8; margin-right: 54px; }
.me { display: flex; align-items: center; gap: 25px; font-size: 21px; font-weight: 500; color: #374151; letter-spacing: -.35px; }
.me-avatar { display: grid; place-items: center; width: 42px; height: 42px; border-radius: 50%; color: #fff; font-size: 18px; font-weight: 400; background: linear-gradient(90deg, #4a7eee, #8a37df); }

.content { padding: 39px 262px 0 269px; }
h1 { display: flex; align-items: center; gap: 18px; height: 48px; font-size: 45px; font-weight: 700; color: #111827; line-height: 48px; letter-spacing: -1.050px; }
h1 span { padding-top: 2px; }
h1 .ico { width: 48px; height: 48px; color: #3563e9; }
.panel { margin-top: 39px; height: 1200px; padding: 36px; border: 1px solid #e4e4e7; border-radius: 12px; background: #fff; }
.panel-head { display: flex; justify-content: space-between; height: 107.500px; }
h2 { display: flex; align-items: center; gap: 12px; height: 36px; font-size: 36px; font-weight: 600; letter-spacing: -2.080px; line-height: 36px; }
h2 .ico { width: 30px; height: 30px; }
.panel-head p { margin-top: 7px; font-size: 21px; line-height: 30px; color: #71757f; letter-spacing: -.28px; }
.primary { display: flex; align-items: center; justify-content: center; gap: 24px; margin-top: 6px; height: 60px; width: 241px; border-radius: 9px; background: #2d3745; color: #fafafa; font-size: 21px; font-weight: 500; letter-spacing: -.25px; }

.cards { display: grid; grid-template-columns: repeat(3, 1fr); gap: 36px; grid-auto-rows: 488px; }
.card { display: flex; flex-direction: column; padding: 36px; border-radius: 12px; background: linear-gradient(135deg, #fff, #fbfcfc 75%, #f8fafc); box-shadow: 0 1px 3px rgba(0,0,0,.05); }
.who { display: flex; align-items: center; gap: 18px; height: 81px; }
.avatar { display: grid; place-items: center; width: 72px; height: 72px; border-radius: 50%; background: linear-gradient(135deg, #4c82ee, #365fe1); color: #fff; font-size: 27px; font-weight: 600; }
h3 { font-size: 27px; line-height: 42px; font-weight: 600; letter-spacing: -.55px; color: #111827; }
.badge { display: block; width: max-content; margin-top: 5px; height: 32px; padding: 0 16.500px; border-radius: 16px; background: #5dc268; color: #fff; font-size: 18px; font-weight: 600; line-height: 32px; letter-spacing: .1px; }
.admin { background: #de524c; }
.manager { background: #4b80ee; }
.card ul { list-style: none; margin-top: 16.500px; padding-bottom: 48.500px; border-bottom: 1px solid #f1f3f5; display: grid; gap: 12px; }
.card li { display: flex; align-items: center; gap: 12px; height: 30px; font-size: 21px; color: #4f5866; letter-spacing: -.22px; }
.card .email { letter-spacing: -.37px; }
.card li .ico { color: #9ca3af; }
.actions { display: flex; gap: 12px; height: 54px; margin-top: 24px; font-size: 21px; font-weight: 500; letter-spacing: -.08px; }
.actions button { width: 60px; display: flex; align-items: center; justify-content: center; gap: 24px; }
.actions .kpi { flex: 1; }
.message { display: flex; flex: none; align-items: center; justify-content: center; gap: 24px; height: 54px; margin-top: 24px; border: 1px solid #fbee9b; border-radius: 9px; background: #fff; font-size: 21px; font-weight: 500; letter-spacing: -.22px; }
.fade-left { position: absolute; left: 0; top: 0; bottom: 0; width: 75px; background: linear-gradient(90deg, rgba(0,0,0,.08), rgba(0,0,0,.025) 40%, transparent); -webkit-mask-image: linear-gradient(transparent, #000 180px); mask-image: linear-gradient(transparent, #000 180px); }
.fade-bottom { position: absolute; inset: auto 0 0 0; height: 105px; background: linear-gradient(transparent, rgba(0,0,0,.025) 45%, rgba(0,0,0,.1)); -webkit-mask-image: linear-gradient(90deg, #000 90%, rgba(0,0,0,.3)); mask-image: linear-gradient(90deg, #000 90%, rgba(0,0,0,.3)); }

.dock { position: relative; flex: none; width: 2386px; height: 102px; margin-left: -30px; padding: 14px 0 0; display: flex; gap: 19.250px; border: 2px solid #4c575a; border-radius: 28px; background: linear-gradient(90deg, #263136, #25333a 28%, #1b1d1f 42%, #22282b 55%, #303d43 66%, #333e42); text-align: center; }
.dock > :first-child { margin-left: -16px; }
.app { display: block; width: 64px; height: 64px; flex: none; overflow: visible; }
.app.running { height: 84px; padding-bottom: 20px; background: radial-gradient(circle at 32px 78px, #aab3b7 3.700px, transparent 4.300px); }
.app-wrap { position: relative; width: 64px; height: 64px; }
.count { position: absolute; left: 43px; top: -9px; width: 32px; height: 32px; border-radius: 50%; background: #e04d40; color: #fff; font-size: 20px; font-weight: 400; line-height: 32px; }
.divider { width: 18.250px; height: 73px; margin-top: -2px; background: linear-gradient(#737c80, #737c80) center / 2px 100% no-repeat; flex: none; }
.zoom-name { font: 500 20px Inter, sans-serif; fill: #fff; text-anchor: middle; }
.cal-month { font: 600 14px Inter, sans-serif; fill: #fff; text-anchor: middle; }
.cal-day { font: 300 39px Inter, sans-serif; fill: #28292a; text-anchor: middle; letter-spacing: -2px; }
.word-w { font: 700 19px Inter, sans-serif; fill: #fff; text-anchor: middle; }
.tv-name { font: 500 27px Inter, sans-serif; fill: #f8f8f8; text-anchor: middle; }
```
